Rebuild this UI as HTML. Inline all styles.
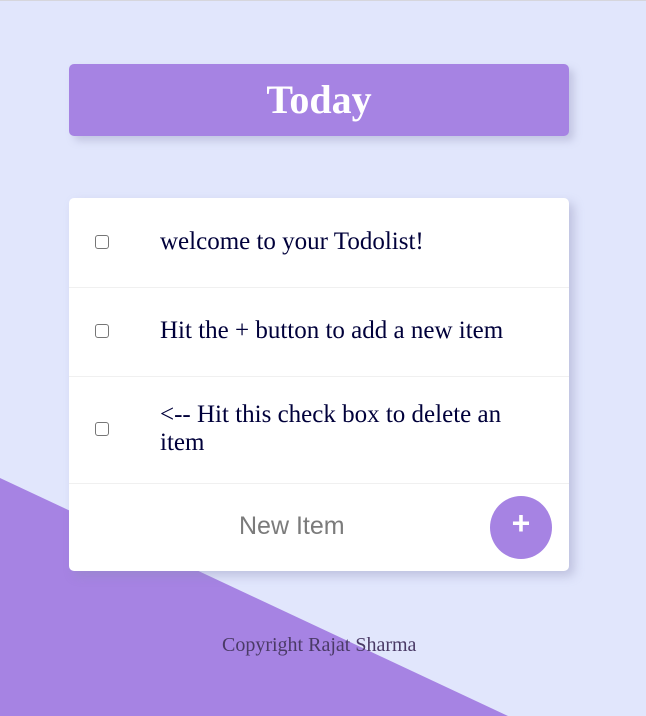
<!DOCTYPE html>
<html><head><style>
html,body{margin:0;padding:0;}
body{width:646px;height:715px;background:#e1e6fc;position:relative;overflow:hidden;border-top:1px solid #d6d6dc;box-sizing:border-box;font-family:"Liberation Serif",serif;}
.tri{position:absolute;left:0;top:0;}
.hdr{position:absolute;left:69px;top:63px;width:500px;height:72px;background:#a683e3;border-radius:5px;box-shadow:5px 5px 8px rgba(140,140,180,.35);color:#fff;font-weight:bold;font-size:40px;text-align:center;line-height:72px;}
.card{position:absolute;left:69px;top:197px;width:500px;height:373px;background:#fff;border-radius:5px;box-shadow:5px 5px 10px rgba(140,140,180,.4);}
.row{position:absolute;left:0;width:500px;border-bottom:1px solid #f0f0f0;}
.cb{position:absolute;left:26px;width:12px;height:12px;border:1px solid #767676;border-radius:3px;background:#fff;}
.t{position:absolute;left:91px;font-size:25px;color:#00003a;line-height:28px;width:380px;}
.ni{position:absolute;left:170px;top:314px;font-family:"Liberation Sans",sans-serif;font-size:25px;color:#7b7b7b;}
.btn{position:absolute;left:421px;top:298px;width:62px;height:63px;border-radius:50%;background:#a683e3;color:#fff;font-family:"Liberation Sans",sans-serif;font-weight:bold;font-size:32px;text-align:center;line-height:55px;}
.cp{position:absolute;left:222px;top:633px;font-size:20px;color:#4a3a66;}
</style></head><body>
<svg class="tri" width="646" height="715"><polygon points="0,477 508,715 0,715" fill="#a683e3"/></svg>
<div class="hdr">Today</div>
<div class="card">
<div class="row" style="top:0;height:89px"><div class="cb" style="top:37px"></div><div class="t" style="top:30px">welcome to your Todolist!</div></div>
<div class="row" style="top:90px;height:88px"><div class="cb" style="top:36px"></div><div class="t" style="top:29px">Hit the + button to add a new item</div></div>
<div class="row" style="top:179px;height:106px"><div class="cb" style="top:45px"></div><div class="t" style="top:24px;width:360px">&lt;-- Hit this check box to delete an item</div></div>
<div class="ni">New Item</div>
<div class="btn">+</div>
</div>
<div class="cp">Copyright Rajat Sharma</div>
</body></html>
